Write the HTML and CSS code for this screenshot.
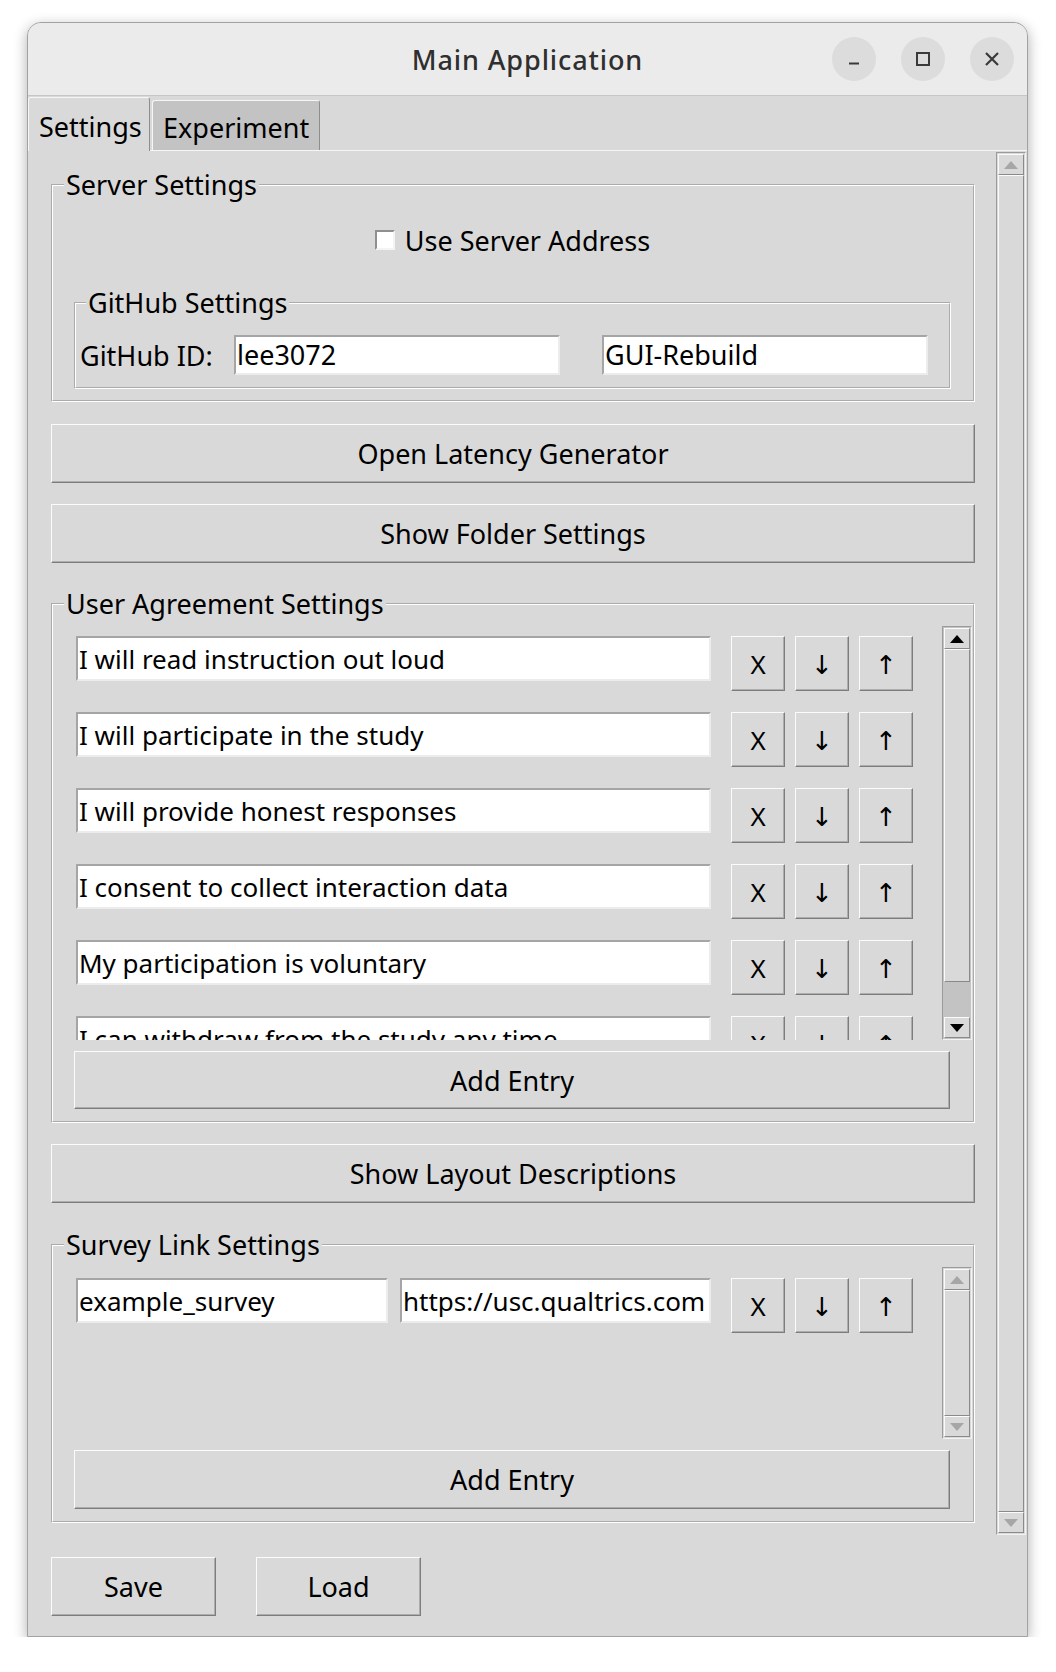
FILE: index.html
```html
<!DOCTYPE html>
<html lang="en">
<head>
<meta charset="utf-8">
<title>Main Application</title>
<link rel="stylesheet" href="styles.css">
</head>
<body>
<div class="window">
  <div class="titlebar">
    <div class="tb-spacer"></div>
    <div class="title">Main Application</div>
    <div class="wm-buttons">
      <div class="wm-btn"><svg width="14" height="14" viewBox="0 0 14 14"><path d="M2 11.5 H12" stroke="#3a3a3a" stroke-width="2" fill="none"/></svg></div>
      <div class="wm-btn"><svg width="16" height="16" viewBox="0 0 16 16"><rect x="2" y="2" width="12" height="12" stroke="#3a3a3a" stroke-width="2" fill="none"/></svg></div>
      <div class="wm-btn"><svg width="16" height="16" viewBox="0 0 16 16"><path d="M2 2 L14 14 M14 2 L2 14" stroke="#3a3a3a" stroke-width="2.2" fill="none"/></svg></div>
    </div>
  </div>

  <div class="tabs">
    <div class="tab active">Settings</div>
    <div class="tab">Experiment</div>
  </div>

  <div class="tab-body">
    <div class="scroll-area">
      <div class="content">
        <fieldset class="group">
          <legend>Server Settings</legend>
          <div class="group-inner server-inner">
            <div class="check-row">
              <span class="checkbox"></span>
              <span class="check-label">Use Server Address</span>
            </div>
            <fieldset class="group github">
              <legend>GitHub Settings</legend>
              <div class="group-inner github-inner">
                <span class="field-label">GitHub ID:</span>
                <div class="entry entry-small">lee3072</div>
                <div class="entry entry-small">GUI-Rebuild</div>
              </div>
            </fieldset>
          </div>
        </fieldset>

        <button class="btn wide first-btn">Open Latency Generator</button>
        <button class="btn wide">Show Folder Settings</button>

        <fieldset class="group list-group">
          <legend>User Agreement Settings</legend>
          <div class="group-inner list-inner">
            <div class="list-frame">
              <div class="viewport agreement">
                <div class="row">
                  <div class="entry entry-long">I will read instruction out loud</div>
                  <button class="btn sq">X</button><button class="btn sq">↓</button><button class="btn sq">↑</button>
                </div>
                <div class="row">
                  <div class="entry entry-long">I will participate in the study</div>
                  <button class="btn sq">X</button><button class="btn sq">↓</button><button class="btn sq">↑</button>
                </div>
                <div class="row">
                  <div class="entry entry-long">I will provide honest responses</div>
                  <button class="btn sq">X</button><button class="btn sq">↓</button><button class="btn sq">↑</button>
                </div>
                <div class="row">
                  <div class="entry entry-long">I consent to collect interaction data</div>
                  <button class="btn sq">X</button><button class="btn sq">↓</button><button class="btn sq">↑</button>
                </div>
                <div class="row">
                  <div class="entry entry-long">My participation is voluntary</div>
                  <button class="btn sq">X</button><button class="btn sq">↓</button><button class="btn sq">↑</button>
                </div>
                <div class="row">
                  <div class="entry entry-long">I can withdraw from the study any time</div>
                  <button class="btn sq">X</button><button class="btn sq">↓</button><button class="btn sq">↑</button>
                </div>
              </div>
              <div class="vscroll">
                <div class="sb-arrow"><svg width="14" height="8" viewBox="0 0 14 8"><path d="M0 8 L7 0 L14 8 Z" fill="#000"/></svg></div>
                <div class="sb-thumb"></div>
                <div class="sb-trough"></div>
                <div class="sb-arrow"><svg width="14" height="8" viewBox="0 0 14 8"><path d="M0 0 L7 8 L14 0 Z" fill="#000"/></svg></div>
              </div>
            </div>
            <button class="btn add-btn">Add Entry</button>
          </div>
        </fieldset>

        <button class="btn wide layout-btn">Show Layout Descriptions</button>

        <fieldset class="group list-group survey-group">
          <legend>Survey Link Settings</legend>
          <div class="group-inner list-inner">
            <div class="list-frame">
              <div class="viewport survey">
                <div class="row">
                  <div class="entry entry-name">example_survey</div>
                  <div class="entry entry-url">https://usc.qualtrics.com</div>
                  <button class="btn sq">X</button><button class="btn sq">↓</button><button class="btn sq">↑</button>
                </div>
              </div>
              <div class="vscroll disabled">
                <div class="sb-arrow"><svg width="14" height="8" viewBox="0 0 14 8"><path d="M0 8 L7 0 L14 8 Z" fill="#a6a6a6"/></svg></div>
                <div class="sb-thumb"></div>
                <div class="sb-arrow"><svg width="14" height="8" viewBox="0 0 14 8"><path d="M0 0 L7 8 L14 0 Z" fill="#a6a6a6"/></svg></div>
              </div>
            </div>
            <button class="btn add-btn">Add Entry</button>
          </div>
        </fieldset>
      </div>

      <div class="vscroll main-scroll disabled">
        <div class="sb-arrow"><svg width="14" height="8" viewBox="0 0 14 8"><path d="M0 8 L7 0 L14 8 Z" fill="#a6a6a6"/></svg></div>
        <div class="sb-thumb"></div>
        <div class="sb-arrow"><svg width="14" height="8" viewBox="0 0 14 8"><path d="M0 0 L7 8 L14 0 Z" fill="#a6a6a6"/></svg></div>
      </div>
    </div>

    <div class="footer">
      <button class="btn foot-btn">Save</button>
      <button class="btn foot-btn">Load</button>
    </div>
  </div>
</div>
</body>
</html>
```
FILE: styles.css
```css
* { box-sizing: border-box; }

html, body {
  margin: 0;
  background: #ffffff;
}

body {
  font-family: "Noto Sans", "DejaVu Sans", sans-serif;
  font-size: 27px;
  color: #000;
}

.window {
  margin: 22px 0 0 27px;
  width: 1001px;
  height: 1615px;
  border: 1px solid #a2a2a2;
  border-radius: 14px 14px 0 0;
  background: #d9d9d9;
  box-shadow: 0 4px 14px rgba(0, 0, 0, 0.32);
  overflow: hidden;
  display: flex;
  flex-direction: column;
}

/* ---------- title bar ---------- */
.titlebar {
  flex: none;
  height: 73px;
  background: #ebebeb;
  border-bottom: 1px solid #c6c6c6;
  display: grid;
  grid-template-columns: 1fr auto 1fr;
  align-items: center;
}

.title {
  font-family: "Noto Sans", sans-serif;
  font-weight: 500;
  font-size: 27px;
  color: #2f2f2f;
  letter-spacing: 0.9px;
}

.wm-buttons {
  display: flex;
  justify-content: flex-end;
  gap: 25px;
  padding-right: 13px;
}

.wm-btn {
  width: 44px;
  height: 44px;
  border-radius: 50%;
  background: #dcdcdc;
  display: flex;
  align-items: center;
  justify-content: center;
}

/* ---------- tabs ---------- */
.tabs {
  flex: none;
  height: 55px;
  display: flex;
  align-items: flex-end;
  border-bottom: 1px solid #f6f6f6;
}

.tab {
  height: 50px;
  padding: 3px 10px 0;
  display: flex;
  align-items: center;
  background: #c3c3c3;
  border: 1px solid;
  border-color: #f6f6f6 #8e8e8e transparent #f6f6f6;
  border-bottom: none;
  border-radius: 3px 3px 0 0;
  margin-left: 2px;
}

.tab.active {
  height: 54px;
  margin-left: 0;
  margin-bottom: -1px;
  background: #d9d9d9;
  width: 122px;
}

/* ---------- body ---------- */
.tab-body {
  flex: 1;
  display: flex;
  flex-direction: column;
}

.scroll-area {
  margin-top: 1px;
  height: 1383px;
  display: flex;
  padding-left: 23px;
}

.content {
  width: 924px;
  flex: none;
  padding-top: 20px;
  display: flex;
  flex-direction: column;
}

/* group boxes (Tk labelframe) */
.group {
  margin: 0;
  padding: 0;
  min-width: 0;
  border: 2px groove #ffffff;
}

.group > legend {
  padding: 0 2px;
  margin-left: 11px;
  line-height: 26px;
}

.server-inner {
  padding: 29px 22px 11px 21px;
}

.check-row {
  height: 26px;
  display: flex;
  align-items: center;
  justify-content: center;
  gap: 10px;
}

.checkbox {
  width: 20px;
  height: 20px;
  background: #fff;
  border: 2px solid;
  border-color: #8f8f8f #f4f4f4 #f4f4f4 #8f8f8f;
}

.github {
  margin-top: 37px;
}

.github > legend {
  margin-left: 10px;
}

.github-inner {
  display: flex;
  align-items: center;
  padding: 19px 0 12px 4px;
}

.field-label {
  width: 154px;
  flex: none;
}

.entry {
  background: #fff;
  border: 2px solid;
  border-color: #a5a5a5 #ececec #ececec #a5a5a5;
  padding: 0 1px;
  white-space: nowrap;
  overflow: hidden;
  flex: none;
  font-size: 26px;
}

.entry-small {
  width: 326px;
  height: 40px;
  line-height: 36px;
  font-size: 27px;
}

.entry-small + .entry-small {
  margin-left: 42px;
}

/* buttons (Tk raised) */
.btn {
  font-family: "Noto Sans", "DejaVu Sans", sans-serif;
  font-size: 27px;
  color: #000;
  background: #d9d9d9;
  border: 1px solid;
  border-color: #fbfbfb #7d7d7d #7d7d7d #fbfbfb;
  box-shadow: inset -1px -1px 0 #adadad;
  padding: 0;
  margin: 0;
  flex: none;
}

.wide {
  height: 59px;
  width: 924px;
  margin-top: 21px;
}

.first-btn {
  margin-top: 22px;
}

.list-group {
  margin-top: 28px;
}

.survey-group {
  margin-top: 29px;
}

.layout-btn {
  margin-top: 21px;
}

.list-inner {
  padding: 9px 0 12px 21px;
  display: flex;
  flex-direction: column;
}

.list-frame {
  display: flex;
}

.viewport {
  flex: 1;
  overflow: hidden;
  padding: 10px 0 0 2px;
}

.viewport.agreement {
  height: 414px;
}

.viewport.survey {
  height: 172px;
  padding-top: 11px;
}

.row {
  display: flex;
  align-items: flex-start;
  margin-bottom: 21px;
}

.entry-long {
  width: 635px;
  height: 45px;
  line-height: 42px;
}

.entry-name {
  width: 312px;
  height: 45px;
  line-height: 42px;
}

.entry-url {
  width: 311px;
  height: 45px;
  line-height: 42px;
  margin-left: 12px;
}

.sq {
  width: 54px;
  height: 55px;
  margin-left: 10px;
  font-size: 26px;
}

.row .entry + .sq,
.row .entry-url + .sq {
  margin-left: 20px;
}

.add-btn {
  width: 876px;
  height: 58px;
  margin-top: 11px;
}

.survey-group .add-btn {
  height: 59px;
}

/* scrollbars */
.vscroll {
  width: 30px;
  flex: none;
  display: flex;
  flex-direction: column;
  background: #c3c3c3;
  border: 1px solid;
  border-color: #9b9b9b #f3f3f3 #f3f3f3 #9b9b9b;
  padding: 1px;
}

.list-frame .vscroll {
  margin-right: 1px;
}

.vscroll.disabled {
  background: #d9d9d9;
}

.sb-arrow {
  flex: none;
  height: 21px;
  display: flex;
  align-items: center;
  justify-content: center;
  background: #d9d9d9;
  border: 1px solid;
  border-color: #fbfbfb #8a8a8a #8a8a8a #fbfbfb;
}

.sb-thumb {
  flex: 1;
  background: #d9d9d9;
  border: 1px solid;
  border-color: #fbfbfb #8a8a8a #8a8a8a #fbfbfb;
}

.sb-trough {
  flex: none;
  height: 35px;
}

.main-scroll {
  margin-left: 21px;
}

/* footer */
.footer {
  display: flex;
  gap: 40px;
  padding: 22px 0 0 23px;
}

.foot-btn {
  width: 165px;
  height: 59px;
}
```
